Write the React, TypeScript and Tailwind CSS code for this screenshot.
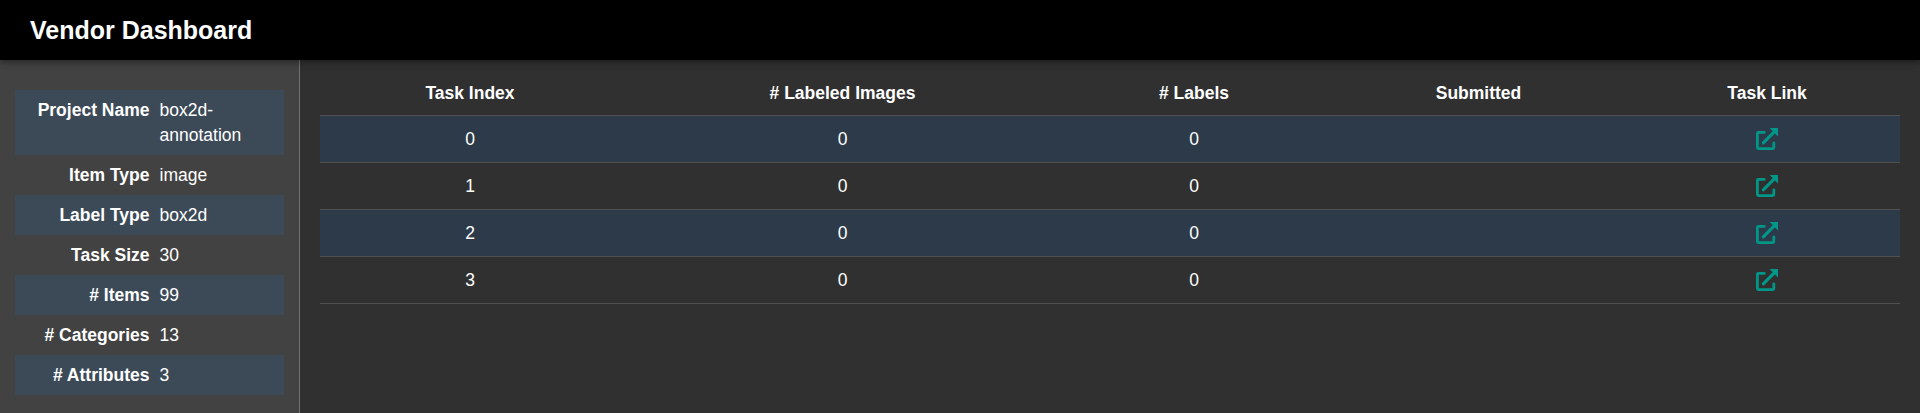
const details = [
  ["Project Name", "box2d-annotation"],
  ["Item Type", "image"],
  ["Label Type", "box2d"],
  ["Task Size", "30"],
  ["# Items", "99"],
  ["# Categories", "13"],
  ["# Attributes", "3"],
];

const columns = ["Task Index", "# Labeled Images", "# Labels", "Submitted", "Task Link"];
const tasks = [0, 1, 2, 3];

function ExternalLinkIcon() {
  return (
    <svg width="22" height="22" viewBox="0 0 22 22" fill="none" aria-hidden="true">
      <path
        d="M8.3 4.4H2.4Q1.4 4.4 1.4 5.4V19.6Q1.4 20.6 2.4 20.6H16.8Q17.8 20.6 17.8 19.6V14.8"
        stroke="currentColor"
        strokeWidth="2.8"
        strokeLinecap="round"
      />
      <path d="M7.3 14.9L18 4.2" stroke="currentColor" strokeWidth="3.1" strokeLinecap="round" />
      <path d="M13.6 0H22V8.4Z" fill="currentColor" />
    </svg>
  );
}

export default function App() {
  return (
    <div className="flex h-[413px] flex-col overflow-hidden bg-[#303030] font-['Liberation_Sans',Arial,sans-serif] text-[17.5px] leading-[25px] text-white">
      <header className="z-10 flex h-[60px] shrink-0 items-center bg-black px-[30px] shadow-[0px_2px_4px_-1px_rgba(0,0,0,0.2),0px_4px_5px_0px_rgba(0,0,0,0.14),0px_1px_10px_0px_rgba(0,0,0,0.12)]">
        <h1 className="text-[25px] leading-[40px] font-bold">Vendor Dashboard</h1>
      </header>
      <div className="flex min-h-0 flex-1">
        <aside className="w-[300px] shrink-0 border-r border-[#717171] bg-[#424242] pt-[30px] pr-[15px] pl-[15px]">
          <dl>
            {details.map(([name, value]) => (
              <div key={name} className="flex px-[10px] py-[7.5px] odd:bg-[#3c4a58]">
                <dt className="w-[124.5px] shrink-0 text-right font-bold">{name}</dt>
                <dd className="ml-[10px] w-[100px]">{value}</dd>
              </div>
            ))}
          </dl>
        </aside>
        <main className="flex-1 px-5">
          <table className="w-full table-fixed border-separate border-spacing-0 text-center">
            <colgroup>
              <col className="w-[300px]" />
              <col className="w-[445px]" />
              <col className="w-[258px]" />
              <col className="w-[311px]" />
              <col className="w-[266px]" />
            </colgroup>
            <thead>
              <tr className="h-[56px]">
                {columns.map((column) => (
                  <th key={column} className="border-b border-[#515151] p-0 pt-[11px] font-bold">{column}</th>
                ))}
              </tr>
            </thead>
            <tbody>
              {tasks.map((task) => (
                <tr key={task} className="h-[47px] odd:bg-[#2c3a49]">
                  <td className="border-b border-[#515151] p-0">{task}</td>
                  <td className="border-b border-[#515151] p-0">0</td>
                  <td className="border-b border-[#515151] p-0">0</td>
                  <td className="border-b border-[#515151] p-0" />
                  <td className="border-b border-[#515151] p-0">
                    <a href="#" aria-label="Open task" className="flex justify-center text-[#009688]">
                      <ExternalLinkIcon />
                    </a>
                  </td>
                </tr>
              ))}
            </tbody>
          </table>
        </main>
      </div>
    </div>
  );
}
